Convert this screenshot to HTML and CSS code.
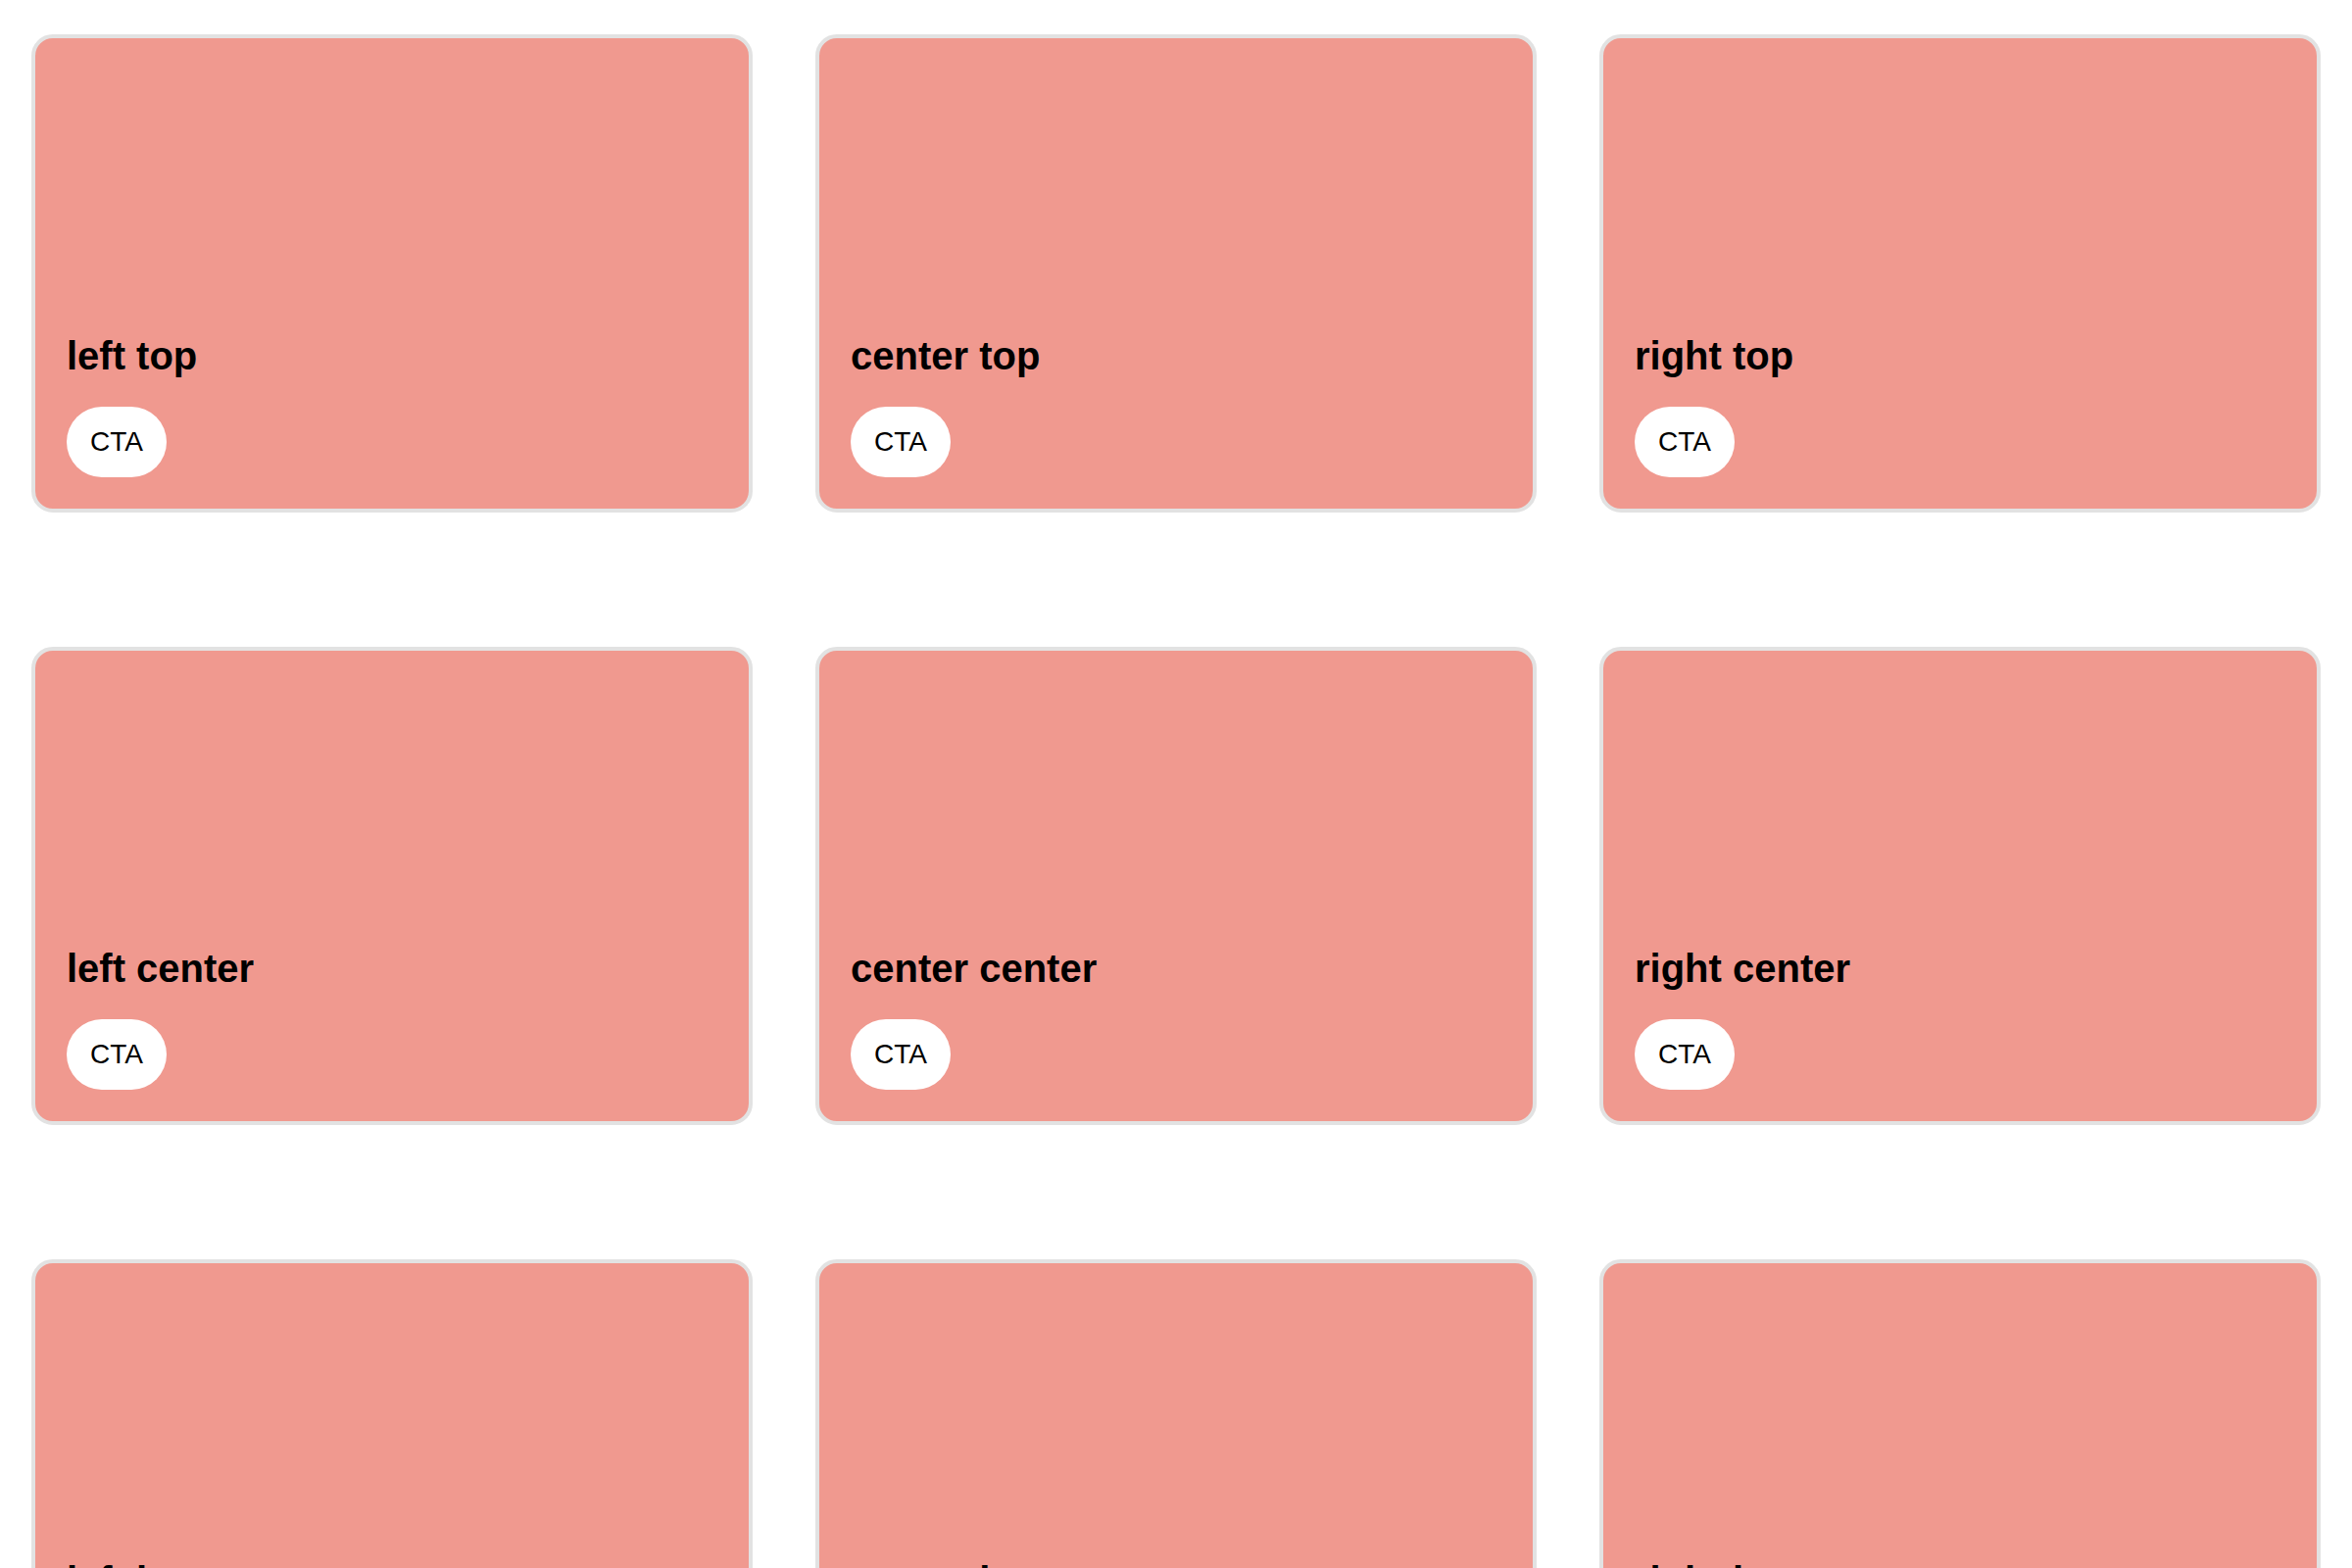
FILE: index.html
```html
<!DOCTYPE html>
<html lang="en">
<head>
<meta charset="utf-8">
<title>Cards</title>
<link rel="stylesheet" href="styles.css">
</head>
<body>
<div class="grid">
  <div class="card"><h2 class="title">left top</h2><button class="cta">CTA</button></div>
  <div class="card"><h2 class="title">center top</h2><button class="cta">CTA</button></div>
  <div class="card"><h2 class="title">right top</h2><button class="cta">CTA</button></div>
  <div class="card"><h2 class="title">left center</h2><button class="cta">CTA</button></div>
  <div class="card"><h2 class="title">center center</h2><button class="cta">CTA</button></div>
  <div class="card"><h2 class="title">right center</h2><button class="cta">CTA</button></div>
  <div class="card"><h2 class="title">left bottom</h2><button class="cta">CTA</button></div>
  <div class="card"><h2 class="title">center bottom</h2><button class="cta">CTA</button></div>
  <div class="card"><h2 class="title">right bottom</h2><button class="cta">CTA</button></div>
</div>
</body>
</html>
```

FILE: styles.css
```css
html, body {
  margin: 0;
  padding: 0;
  background: #ffffff;
}

body {
  font-family: "Liberation Sans", Arial, sans-serif;
  color: #000000;
}

.grid {
  display: grid;
  grid-template-columns: repeat(3, 1fr);
  column-gap: 64px;
  row-gap: 137px;
  padding: 35px 32px 32px;
}

.card {
  box-sizing: border-box;
  height: 488px;
  background: #f0998f;
  border: 4px solid #e2e2e2;
  border-radius: 22px;
  padding: 32px;
  display: flex;
  flex-direction: column;
  justify-content: flex-end;
  align-items: flex-start;
}

.title {
  margin: 0 0 29px;
  font-size: 40px;
  line-height: 46px;
  font-weight: 700;
}

.cta {
  font-family: "Liberation Sans", Arial, sans-serif;
  font-size: 28px;
  line-height: 32px;
  padding: 20px 24px;
  border: none;
  border-radius: 36px;
  background: #ffffff;
  color: #000000;
}
```
